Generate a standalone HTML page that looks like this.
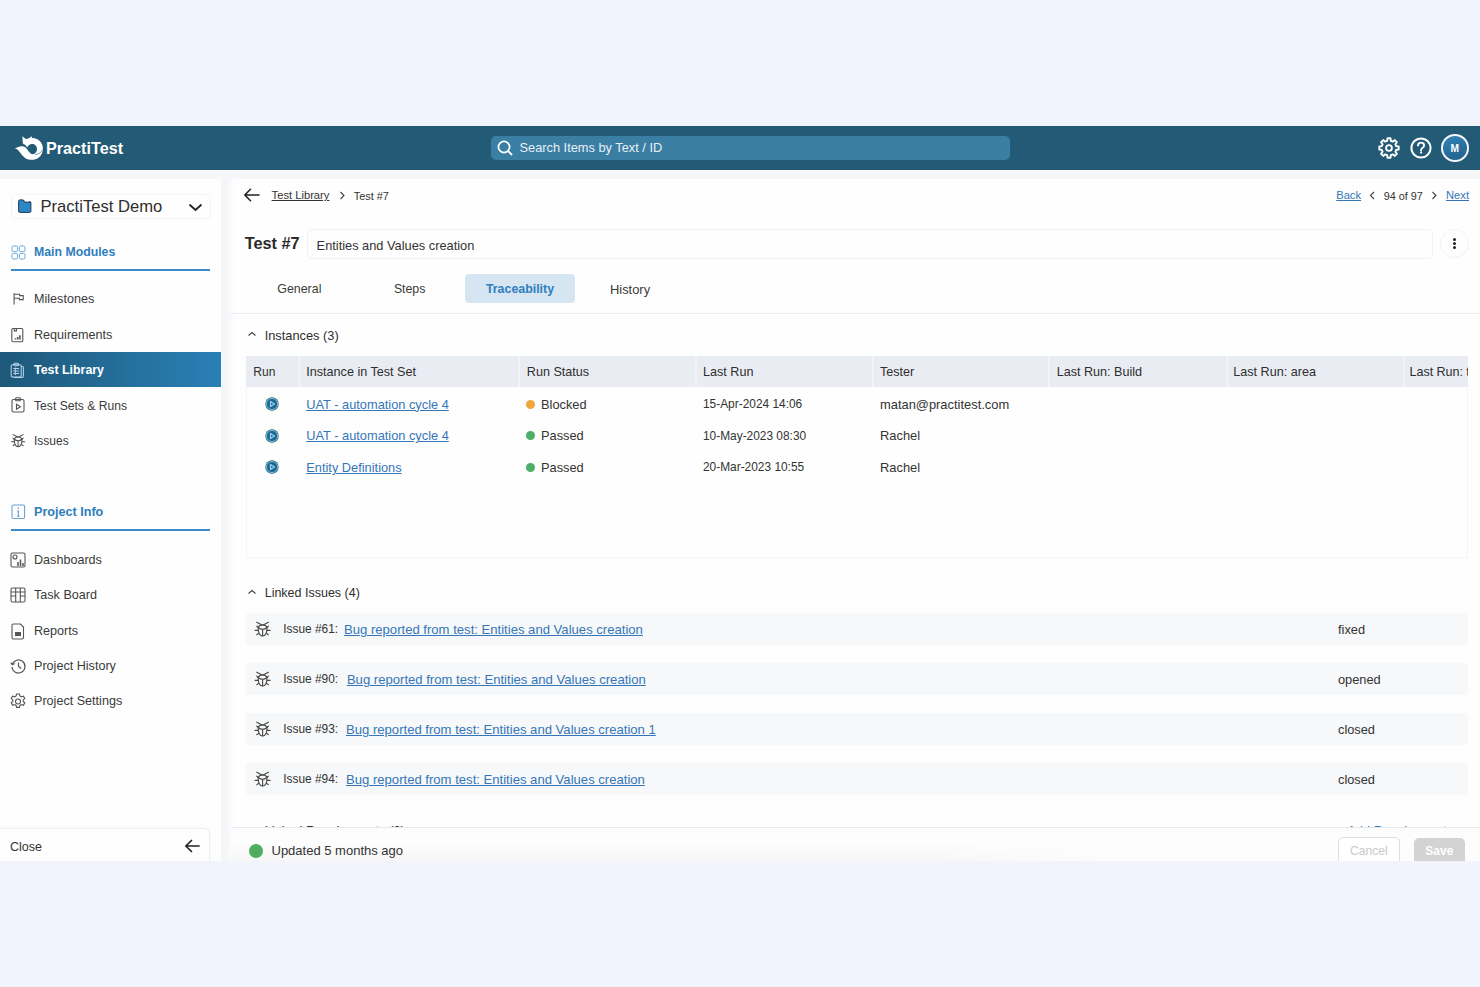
<!DOCTYPE html>
<html><head><meta charset="utf-8">
<style>
*{box-sizing:border-box;margin:0;padding:0}
html,body{width:1480px;height:987px;overflow:hidden;background:#f1f4fd;font-family:"Liberation Sans",sans-serif;color:#333}
.a{position:absolute}
.t{position:absolute;white-space:nowrap}
svg{overflow:visible}
</style></head><body>
<div class="a" style="left:0px;top:126px;width:1480px;height:44px;background:#235a75"></div>
<svg class="a" style="left:12px;top:132px;" width="36" height="30" viewBox="0 0 36 30"><path fill="#fff" fill-rule="evenodd" d="M10.9 11.8 L10.4 4.3 L14 7.2 C15 6.6 16 6.3 17 6.2 L19.6 4.2 L19.9 6.1 C26 6 30.9 10.5 30.9 16.5 C30.9 22 26.5 26.5 20.5 26.8 L20.5 22.2 C23.5 22 25 19.8 25 17 C25 14 22.8 12 20 12 C17.5 12 15.5 13.8 15.2 16 C14 13.8 12.5 12.5 10.9 11.8 Z"/>
<path fill="#fff" d="M2.8 16.6 C6.5 14.2 10.5 13.2 13.5 15.5 C15.5 17 16.5 20.5 19.5 22 C22.5 23.3 27 22.3 30.6 18.5 C30 24.5 25 28.2 18.5 27.8 C12 27.4 9.5 22 6.8 19 C5.6 17.6 4.3 16.9 2.8 16.6 Z"/>
<path d="M10.8 11.9 C12.8 12.7 14.3 14.2 15.3 16.2" fill="none" stroke="#235a75" stroke-width="0.7"/>
<path d="M23 22.6 C26 22.5 29 20.8 30.9 17.6" fill="none" stroke="#235a75" stroke-width="0.6"/></svg>
<div class="t" style="left:46.0px;top:137.79px;font-size:16.2px;line-height:21px;color:#fff;font-weight:700;">PractiTest</div>
<div class="a" style="left:491px;top:135.5px;width:519px;height:24.5px;background:#3a7ea4;border-radius:5px"></div>
<svg class="a" style="left:497px;top:140px;" width="16" height="16" viewBox="0 0 16 16"><circle cx="7" cy="7" r="5.6" fill="none" stroke="#fff" stroke-width="1.7"/><path d="M11 11 L14.5 14.5" stroke="#fff" stroke-width="1.8" stroke-linecap="round"/></svg>
<div class="t" style="left:519.5px;top:139.06px;font-size:12.8px;line-height:17px;color:#e8f0f5;">Search Items by Text / ID</div>
<svg class="a" style="left:1377.5px;top:136.5px;" width="22" height="22" viewBox="0 0 22 22"><g fill="none" stroke="#fff" stroke-width="1.9" stroke-linejoin="round"><path d="M20.68 9.47 L20.68 12.53 L18.17 12.84 L17.37 14.77 L18.93 16.76 L16.76 18.93 L14.77 17.37 L12.84 18.17 L12.53 20.68 L9.47 20.68 L9.16 18.17 L7.23 17.37 L5.24 18.93 L3.07 16.76 L4.63 14.77 L3.83 12.84 L1.32 12.53 L1.32 9.47 L3.83 9.16 L4.63 7.23 L3.07 5.24 L5.24 3.07 L7.23 4.63 L9.16 3.83 L9.47 1.32 L12.53 1.32 L12.84 3.83 L14.77 4.63 L16.76 3.07 L18.93 5.24 L17.37 7.23 L18.17 9.16Z"/><circle cx="11" cy="11" r="2.9"/></g></svg>
<svg class="a" style="left:1409.5px;top:137px;" width="22" height="22" viewBox="0 0 22 22"><circle cx="11" cy="11" r="9.6" fill="none" stroke="#fff" stroke-width="2"/><path d="M8 8.6c0-1.8 1.4-3 3.1-3 1.7 0 3 1.2 3 2.8 0 1.4-.9 2-1.8 2.6-.8.5-1.2 1-1.2 2v.6" fill="none" stroke="#fff" stroke-width="1.9" stroke-linecap="round"/><circle cx="11.1" cy="15.6" r="1.1" fill="#fff"/></svg>
<div class="a" style="left:1440.5px;top:133.5px;width:28px;height:28px;border-radius:50%;border:2px solid #f4f7fa;background:linear-gradient(160deg,#3384bb,#205e88)"></div>
<div class="t" style="left:1450.4px;top:141.77px;font-size:10.2px;line-height:13px;color:#fff;font-weight:700;">M</div>
<div class="a" style="left:0px;top:170px;width:1480px;height:691px;background:#f6f7f9"></div>
<div class="a" style="left:0px;top:179px;width:221px;height:682px;background:#fefefe"></div>
<div class="a" style="left:231px;top:179px;width:1249px;height:682px;background:#fefefe"></div>
<div class="a" style="left:221px;top:179px;width:14px;height:682px;background:linear-gradient(90deg,#f4f5f8 0px,#f5f6f9 6px,#f9fafb 10px,#fefefe 14px)"></div>
<div class="a" style="left:10.5px;top:194px;width:200px;height:25px;border:1px solid #f4f4f6;border-radius:4px;box-shadow:0 1px 2px rgba(0,0,0,0.015)"></div>
<svg class="a" style="left:16.6px;top:199.3px;" width="15" height="14" viewBox="0 0 15 14"><path d="M1.6 2.1c0-.7.5-1.2 1.2-1.2h3.4l1.5 1.7h5c.7 0 1.2.5 1.2 1.2v8.4c0 .7-.5 1.2-1.2 1.2H2.8c-.7 0-1.2-.5-1.2-1.2z" fill="#2c86c8" stroke="#1f3d57" stroke-width="1"/><path d="M7.6 2.7h4.6" stroke="#e8eef3" stroke-width="1"/><path d="M6.3 1l1.4 2.3h5.8" fill="none" stroke="#1f3d57" stroke-width="0.9"/></svg>
<div class="t" style="left:40.5px;top:195.65px;font-size:16.6px;line-height:22px;color:#2e2e2e;">PractiTest Demo</div>
<svg class="a" style="left:188px;top:203px;" width="15" height="9" viewBox="0 0 15 9"><path d="M2 2 L7.5 7 L13 2" fill="none" stroke="#222" stroke-width="1.8" stroke-linecap="round"/></svg>
<svg class="a" style="left:10.5px;top:244.5px;" width="15" height="15" viewBox="0 0 15 15"><g fill="none" stroke="#6aaade" stroke-width="1"><rect x="1" y="1" width="5.6" height="5.6" rx="1.4"/><rect x="8.4" y="1" width="5.6" height="5.6" rx="1.4"/><rect x="1" y="8.4" width="5.6" height="5.6" rx="1.4"/><rect x="8.4" y="8.4" width="5.6" height="5.6" rx="1.4"/></g></svg>
<div class="t" style="left:34.0px;top:243.94px;font-size:12.3px;line-height:16px;color:#2f7ebd;font-weight:700;">Main Modules</div>
<div class="a" style="left:11px;top:269px;width:199px;height:2px;background:#3f8bc9"></div>
<div class="t" style="left:34.0px;top:291.43px;font-size:12.6px;line-height:16px;color:#3a3a3a;">Milestones</div>
<svg class="a" style="left:9px;top:290.3px;" width="18" height="18" viewBox="0 0 18 18"><g fill="none" stroke="#555" stroke-width="1.1"><path d="M5.1 3.3V14.6"/><path d="M5.1 4.3H10.6V5.6H14.2V9.6H10.4V8.3H5.1"/></g></svg>
<div class="t" style="left:34.0px;top:326.83px;font-size:12.6px;line-height:16px;color:#3a3a3a;">Requirements</div>
<svg class="a" style="left:9px;top:325.7px;" width="18" height="18" viewBox="0 0 18 18"><g fill="none" stroke="#555" stroke-width="1.1"><rect x="2.8" y="2.5" width="11" height="13.3" rx="1.2"/><path d="M5.3 2.5v2.4h2.2V2.5"/><path d="M6.5 13.4v-1.2M8.7 13.4v-2.4M10.9 13.4V9.2" stroke-width="1.6"/></g></svg>
<div class="a" style="left:0px;top:352.4px;width:221px;height:35px;background:linear-gradient(90deg,#1d5879 0%,#236a94 45%,#2a80b6 100%)"></div>
<div class="t" style="left:34.0px;top:362.20px;font-size:12.4px;line-height:16px;color:#fff;font-weight:700;">Test Library</div>
<svg class="a" style="left:9px;top:361.0px;" width="18" height="18" viewBox="0 0 18 18"><g fill="none" stroke="#b6d3e8" stroke-width="1.05"><path d="M12.2 5.2h1c.7 0 1.2.5 1.2 1.2v8.8c0 .7-.5 1.2-1.2 1.2H4.5"/><rect x="2.2" y="3.8" width="10" height="12.2" rx="1.3"/><rect x="5" y="2.2" width="4.4" height="2.6" rx="0.9"/><path d="M4.3 7.5h5.8M4.3 10h5.8M4.3 12.5h5.8M6.3 6.5v7.5"/></g></svg>
<div class="t" style="left:34.0px;top:397.59px;font-size:12.15px;line-height:16px;color:#3a3a3a;">Test Sets & Runs</div>
<svg class="a" style="left:9px;top:396.3px;" width="18" height="18" viewBox="0 0 18 18"><g fill="none" stroke="#555" stroke-width="1.1"><rect x="3" y="3.5" width="12" height="12.5" rx="1.5"/><rect x="6.5" y="1.8" width="5" height="3" rx="1"/><path d="M7.5 8.2v5l4-2.5z"/></g></svg>
<div class="t" style="left:34.0px;top:432.94px;font-size:12px;line-height:16px;color:#3a3a3a;">Issues</div>
<svg class="a" style="left:7.2px;top:429.6px;transform:scale(0.88);transform-origin:0 0" width="26" height="24" viewBox="0 0 26 24"><g fill="none" stroke="#4a4a4a" stroke-width="1.15" stroke-linecap="round"><path d="M6.8 5.2L12 7.9M18.4 5.2L13.2 7.9"/><path d="M8.2 10.5C9 8.6 10.8 7.8 12.6 7.8C14.4 7.8 16.2 8.6 17 10.5"/><path d="M8.2 10.5C8 15 9.5 19 12.6 19C15.7 19 17.2 15 17 10.5"/><path d="M8.2 10.5C10 12 11.3 12.3 12.6 12.3C13.9 12.3 15.2 12 17 10.5M12.6 12.3V18.8"/><path d="M8.3 10.3L6.8 9.2M8 13.4H5.1M8.6 16.6L6.9 17.6M16.9 10.3L18.4 9.2M17.2 13.4H20.1M16.6 16.6L18.3 17.6"/></g></svg>
<svg class="a" style="left:11px;top:503.5px;" width="15" height="15" viewBox="0 0 15 15"><g fill="none" stroke="#6a9fcc" stroke-width="1.05"><rect x="1" y="1" width="12.6" height="13.5" rx="1.4"/><path d="M7.3 6.5v6M7.3 3.6v1.3" stroke-width="1.2"/><path d="M6 12.3h2.6M6.2 6.7h1"/></g></svg>
<div class="t" style="left:34.0px;top:504.13px;font-size:12.6px;line-height:16px;color:#2f7ebd;font-weight:700;">Project Info</div>
<div class="a" style="left:11px;top:528.8px;width:199px;height:2px;background:#3f8bc9"></div>
<div class="t" style="left:34.0px;top:551.63px;font-size:12.6px;line-height:16px;color:#3a3a3a;">Dashboards</div>
<svg class="a" style="left:9px;top:550.5px;" width="18" height="18" viewBox="0 0 18 18"><g fill="none" stroke="#555" stroke-width="1.1"><rect x="2" y="2" width="14" height="14" rx="1.5"/><circle cx="6" cy="6" r="2"/><path d="M9 15v-4M11.5 15V8.5M14 15v-3" stroke-width="1.5"/></g></svg>
<div class="t" style="left:34.0px;top:587.13px;font-size:12.6px;line-height:16px;color:#3a3a3a;">Task Board</div>
<svg class="a" style="left:9px;top:586.0px;" width="18" height="18" viewBox="0 0 18 18"><g fill="none" stroke="#555" stroke-width="1.1"><rect x="2" y="2" width="14" height="14" rx="1.5"/><path d="M2 6h14M6.7 2v14M11.3 2v14M2 10h4.7M11.3 10H16"/></g></svg>
<div class="t" style="left:34.0px;top:622.63px;font-size:12.6px;line-height:16px;color:#3a3a3a;">Reports</div>
<svg class="a" style="left:9px;top:621.5px;" width="18" height="18" viewBox="0 0 18 18"><g fill="none" stroke="#555" stroke-width="1.1"><path d="M4.5 2h7l3 3v10.5c0 .8-.7 1.5-1.5 1.5H4.5C3.7 17 3 16.3 3 15.5v-12C3 2.7 3.7 2 4.5 2z"/><rect x="6" y="10" width="6" height="4" fill="#555" stroke="none"/></g></svg>
<div class="t" style="left:34.0px;top:657.93px;font-size:12.6px;line-height:16px;color:#3a3a3a;">Project History</div>
<svg class="a" style="left:9px;top:656.8px;" width="18" height="18" viewBox="0 0 18 18"><g fill="none" stroke="#555" stroke-width="1.2"><path d="M3.3 7.5A6.5 6.5 0 1 1 3 10"/><path d="M1.8 5.5l1.5 2.2 2.3-1.3"/><path d="M9.5 5.5v4l2.8 2"/></g></svg>
<div class="t" style="left:34.0px;top:693.23px;font-size:12.6px;line-height:16px;color:#3a3a3a;">Project Settings</div>
<svg class="a" style="left:9px;top:692.1px;" width="18" height="18" viewBox="0 0 18 18"><g fill="none" stroke="#555" stroke-width="1.1"><path d="M7.6 2h2.8l.5 2 1.5.8 2-.7 1.4 2.4-1.6 1.4v1.6l1.6 1.4-1.4 2.4-2-.7-1.5.8-.5 2H7.6l-.5-2-1.5-.8-2 .7-1.4-2.4 1.6-1.4V7.9L2.2 6.5l1.4-2.4 2 .7 1.5-.8z"/><circle cx="9" cy="9.5" r="2.5"/></g></svg>
<div class="a" style="left:-10px;top:828px;width:220px;height:40px;border:1px solid #eeeff1;border-radius:6px;background:#fefefe;box-shadow:0 -1px 3px rgba(0,0,0,0.03)"></div>
<div class="t" style="left:10.0px;top:838.97px;font-size:12.5px;line-height:16px;color:#333;">Close</div>
<svg class="a" style="left:184px;top:839px;" width="16" height="14" viewBox="0 0 16 14"><path d="M15 7H1.8M7.5 1.5L1.8 7l5.7 5.5" fill="none" stroke="#222" stroke-width="1.7" stroke-linecap="round" stroke-linejoin="round"/></svg>
<svg class="a" style="left:243px;top:188px;" width="17" height="14" viewBox="0 0 17 14"><path d="M16 7H1.8M7.5 1.3L1.8 7l5.7 5.7" fill="none" stroke="#222" stroke-width="1.6" stroke-linecap="round" stroke-linejoin="round"/></svg>
<div class="t" style="left:271.6px;top:188.32px;font-size:11.2px;line-height:15px;color:#333;text-decoration:underline;">Test Library</div>
<svg class="a" style="left:339px;top:191px;" width="7" height="9" viewBox="0 0 7 9"><path d="M1.5 1l3.5 3.5L1.5 8" fill="none" stroke="#444" stroke-width="1.1"/></svg>
<div class="t" style="left:353.7px;top:188.92px;font-size:10.9px;line-height:14px;color:#333;">Test #7</div>
<div class="t" style="left:1336.2px;top:187.92px;font-size:11.2px;line-height:15px;color:#3576b8;text-decoration:underline;">Back</div>
<svg class="a" style="left:1369px;top:191px;" width="7" height="9" viewBox="0 0 7 9"><path d="M5 1L1.5 4.5 5 8" fill="none" stroke="#444" stroke-width="1.1"/></svg>
<div class="t" style="left:1383.8px;top:188.56px;font-size:10.8px;line-height:14px;color:#333;">94 of 97</div>
<svg class="a" style="left:1431px;top:191px;" width="7" height="9" viewBox="0 0 7 9"><path d="M1.5 1l3.5 3.5L1.5 8" fill="none" stroke="#444" stroke-width="1.1"/></svg>
<div class="t" style="left:1446.0px;top:187.92px;font-size:11.2px;line-height:15px;color:#3576b8;text-decoration:underline;">Next</div>
<div class="t" style="left:244.7px;top:233.45px;font-size:16.3px;line-height:21px;color:#2a2a2a;font-weight:700;">Test #7</div>
<div class="a" style="left:307px;top:228.5px;width:1125.5px;height:30px;border:1px solid #f2f2f4;border-radius:4px"></div>
<div class="t" style="left:316.6px;top:236.66px;font-size:12.8px;line-height:17px;color:#333;">Entities and Values creation</div>
<div class="a" style="left:1440px;top:228.5px;width:29px;height:29px;border:1px solid #f2f2f4;border-radius:50%"></div>
<div class="a" style="left:1453px;top:237.9px;width:3px;height:3px;background:#222;border-radius:50%"></div>
<div class="a" style="left:1453px;top:241.9px;width:3px;height:3px;background:#222;border-radius:50%"></div>
<div class="a" style="left:1453px;top:245.9px;width:3px;height:3px;background:#222;border-radius:50%"></div>
<div class="a" style="left:465px;top:274.4px;width:110px;height:28.6px;background:#d5e5f2;border-radius:4px"></div>
<div class="t" style="left:277.3px;top:281.30px;font-size:12.4px;line-height:16px;color:#3a3a3a;">General</div>
<div class="t" style="left:393.9px;top:281.34px;font-size:12.3px;line-height:16px;color:#3a3a3a;">Steps</div>
<div class="t" style="left:485.9px;top:281.30px;font-size:12.4px;line-height:16px;color:#2f7ebd;font-weight:700;">Traceability</div>
<div class="t" style="left:610.0px;top:280.63px;font-size:12.9px;line-height:17px;color:#3a3a3a;">History</div>
<div class="a" style="left:231px;top:312.5px;width:1249px;height:1px;background:#ececee"></div>
<svg class="a" style="left:246px;top:330px;" width="12" height="8" viewBox="0 0 12 8"><path d="M2.5 5.5l3.5-3 3.5 3" fill="none" stroke="#444" stroke-width="1.1"/></svg>
<div class="t" style="left:264.7px;top:326.86px;font-size:12.8px;line-height:17px;color:#2e2e2e;">Instances (3)</div>
<div class="a" style="left:246px;top:355.8px;width:1221.5px;height:31.2px;background:#e9ecf3"></div>
<div class="a" style="left:297.5px;top:355.8px;width:2px;height:31.2px;background:#f1f3f8"></div>
<div class="a" style="left:518px;top:355.8px;width:2px;height:31.2px;background:#f1f3f8"></div>
<div class="a" style="left:695px;top:355.8px;width:2px;height:31.2px;background:#f1f3f8"></div>
<div class="a" style="left:871.5px;top:355.8px;width:2px;height:31.2px;background:#f1f3f8"></div>
<div class="a" style="left:1048px;top:355.8px;width:2px;height:31.2px;background:#f1f3f8"></div>
<div class="a" style="left:1226px;top:355.8px;width:2px;height:31.2px;background:#f1f3f8"></div>
<div class="a" style="left:1402.5px;top:355.8px;width:2px;height:31.2px;background:#f1f3f8"></div>
<div class="a" style="left:246px;top:387px;width:1221.5px;height:171px;border:1px solid #f4f5f7;border-top:none;box-shadow:0 1px 1px rgba(0,0,0,0.015)"></div>
<div class="t" style="left:253.3px;top:363.84px;font-size:12px;line-height:16px;color:#2e2e2e;">Run</div>
<div class="t" style="left:306.3px;top:363.63px;font-size:12.6px;line-height:16px;color:#2e2e2e;">Instance in Test Set</div>
<div class="t" style="left:526.8px;top:363.63px;font-size:12.6px;line-height:16px;color:#2e2e2e;">Run Status</div>
<div class="t" style="left:703.0px;top:363.63px;font-size:12.6px;line-height:16px;color:#2e2e2e;">Last Run</div>
<div class="t" style="left:879.9px;top:363.63px;font-size:12.6px;line-height:16px;color:#2e2e2e;">Tester</div>
<div class="t" style="left:1056.7px;top:363.63px;font-size:12.6px;line-height:16px;color:#2e2e2e;">Last Run: Build</div>
<div class="t" style="left:1233.3px;top:363.63px;font-size:12.6px;line-height:16px;color:#2e2e2e;">Last Run: area</div>
<div class="a" style="left:1403px;top:360px;width:65px;height:24px;overflow:hidden">
<div class="t" style="left:6.5px;top:3.63px;font-size:12.6px;line-height:16px;color:#2e2e2e;word-spacing:-0.3px;">Last Run: test</div>
</div>
<svg class="a" style="left:265px;top:397.0px;" width="14" height="14" viewBox="0 0 14 14"><circle cx="7" cy="7" r="6.7" fill="#2a5874"/><circle cx="7" cy="7" r="5.6" fill="#18698f" stroke="#86bcdd" stroke-width="1"/><path d="M5.5 4.5v5l4-2.5z" fill="none" stroke="#9dcbea" stroke-width="1.3" stroke-linejoin="round"/></svg>
<div class="t" style="left:306.3px;top:395.86px;font-size:12.8px;line-height:17px;color:#3576b8;text-decoration:underline;">UAT - automation cycle 4</div>
<div class="a" style="left:526px;top:399.8px;width:9px;height:9px;background:#f0a83c;border-radius:50%"></div>
<div class="t" style="left:541.0px;top:395.86px;font-size:12.8px;line-height:17px;color:#333;">Blocked</div>
<div class="t" style="left:703.0px;top:397.18px;font-size:11.9px;line-height:15px;color:#333;">15-Apr-2024 14:06</div>
<div class="t" style="left:880.0px;top:395.83px;font-size:12.9px;line-height:17px;color:#333;">matan@practitest.com</div>
<svg class="a" style="left:265px;top:428.5px;" width="14" height="14" viewBox="0 0 14 14"><circle cx="7" cy="7" r="6.7" fill="#2a5874"/><circle cx="7" cy="7" r="5.6" fill="#18698f" stroke="#86bcdd" stroke-width="1"/><path d="M5.5 4.5v5l4-2.5z" fill="none" stroke="#9dcbea" stroke-width="1.3" stroke-linejoin="round"/></svg>
<div class="t" style="left:306.3px;top:427.36px;font-size:12.8px;line-height:17px;color:#3576b8;text-decoration:underline;">UAT - automation cycle 4</div>
<div class="a" style="left:526px;top:431.3px;width:9px;height:9px;background:#4cae67;border-radius:50%"></div>
<div class="t" style="left:541.0px;top:427.36px;font-size:12.8px;line-height:17px;color:#333;">Passed</div>
<div class="t" style="left:703.0px;top:428.68px;font-size:11.9px;line-height:15px;color:#333;">10-May-2023 08:30</div>
<div class="t" style="left:880.0px;top:427.33px;font-size:12.9px;line-height:17px;color:#333;">Rachel</div>
<svg class="a" style="left:265px;top:460.3px;" width="14" height="14" viewBox="0 0 14 14"><circle cx="7" cy="7" r="6.7" fill="#2a5874"/><circle cx="7" cy="7" r="5.6" fill="#18698f" stroke="#86bcdd" stroke-width="1"/><path d="M5.5 4.5v5l4-2.5z" fill="none" stroke="#9dcbea" stroke-width="1.3" stroke-linejoin="round"/></svg>
<div class="t" style="left:306.3px;top:459.16px;font-size:12.8px;line-height:17px;color:#3576b8;text-decoration:underline;">Entity Definitions</div>
<div class="a" style="left:526px;top:463.1px;width:9px;height:9px;background:#4cae67;border-radius:50%"></div>
<div class="t" style="left:541.0px;top:459.16px;font-size:12.8px;line-height:17px;color:#333;">Passed</div>
<div class="t" style="left:703.0px;top:460.48px;font-size:11.9px;line-height:15px;color:#333;">20-Mar-2023 10:55</div>
<div class="t" style="left:880.0px;top:459.13px;font-size:12.9px;line-height:17px;color:#333;">Rachel</div>
<svg class="a" style="left:246px;top:588px;" width="12" height="8" viewBox="0 0 12 8"><path d="M2.5 5.5l3.5-3 3.5 3" fill="none" stroke="#444" stroke-width="1.1"/></svg>
<div class="t" style="left:264.7px;top:584.87px;font-size:12.5px;line-height:16px;color:#2e2e2e;">Linked Issues (4)</div>
<div class="a" style="left:245.5px;top:613px;width:1222.5px;height:31.7px;background:#f6f8f9;border-radius:3px"></div>
<svg class="a" style="left:250px;top:617px;" width="26" height="24" viewBox="0 0 26 24"><g fill="none" stroke="#4a4a4a" stroke-width="1.15" stroke-linecap="round"><path d="M6.8 5.2L12 7.9M18.4 5.2L13.2 7.9"/><path d="M8.2 10.5C9 8.6 10.8 7.8 12.6 7.8C14.4 7.8 16.2 8.6 17 10.5"/><path d="M8.2 10.5C8 15 9.5 19 12.6 19C15.7 19 17.2 15 17 10.5"/><path d="M8.2 10.5C10 12 11.3 12.3 12.6 12.3C13.9 12.3 15.2 12 17 10.5M12.6 12.3V18.8"/><path d="M8.3 10.3L6.8 9.2M8 13.4H5.1M8.6 16.6L6.9 17.6M16.9 10.3L18.4 9.2M17.2 13.4H20.1M16.6 16.6L18.3 17.6"/></g></svg>
<div class="t" style="left:283.2px;top:622.18px;font-size:11.9px;line-height:15px;color:#333;">Issue #61:</div>
<div class="t" style="left:344.0px;top:620.76px;font-size:13.1px;line-height:17px;color:#3576b8;text-decoration:underline;">Bug reported from test: Entities and Values creation</div>
<div class="t" style="left:1338.0px;top:620.86px;font-size:12.8px;line-height:17px;color:#333;">fixed</div>
<div class="a" style="left:245.5px;top:663.3px;width:1222.5px;height:31.7px;background:#f6f8f9;border-radius:3px"></div>
<svg class="a" style="left:250px;top:667.3px;" width="26" height="24" viewBox="0 0 26 24"><g fill="none" stroke="#4a4a4a" stroke-width="1.15" stroke-linecap="round"><path d="M6.8 5.2L12 7.9M18.4 5.2L13.2 7.9"/><path d="M8.2 10.5C9 8.6 10.8 7.8 12.6 7.8C14.4 7.8 16.2 8.6 17 10.5"/><path d="M8.2 10.5C8 15 9.5 19 12.6 19C15.7 19 17.2 15 17 10.5"/><path d="M8.2 10.5C10 12 11.3 12.3 12.6 12.3C13.9 12.3 15.2 12 17 10.5M12.6 12.3V18.8"/><path d="M8.3 10.3L6.8 9.2M8 13.4H5.1M8.6 16.6L6.9 17.6M16.9 10.3L18.4 9.2M17.2 13.4H20.1M16.6 16.6L18.3 17.6"/></g></svg>
<div class="t" style="left:283.2px;top:672.48px;font-size:11.9px;line-height:15px;color:#333;">Issue #90:</div>
<div class="t" style="left:346.9px;top:671.06px;font-size:13.1px;line-height:17px;color:#3576b8;text-decoration:underline;">Bug reported from test: Entities and Values creation</div>
<div class="t" style="left:1338.0px;top:671.16px;font-size:12.8px;line-height:17px;color:#333;">opened</div>
<div class="a" style="left:245.5px;top:713px;width:1222.5px;height:31.7px;background:#f6f8f9;border-radius:3px"></div>
<svg class="a" style="left:250px;top:717px;" width="26" height="24" viewBox="0 0 26 24"><g fill="none" stroke="#4a4a4a" stroke-width="1.15" stroke-linecap="round"><path d="M6.8 5.2L12 7.9M18.4 5.2L13.2 7.9"/><path d="M8.2 10.5C9 8.6 10.8 7.8 12.6 7.8C14.4 7.8 16.2 8.6 17 10.5"/><path d="M8.2 10.5C8 15 9.5 19 12.6 19C15.7 19 17.2 15 17 10.5"/><path d="M8.2 10.5C10 12 11.3 12.3 12.6 12.3C13.9 12.3 15.2 12 17 10.5M12.6 12.3V18.8"/><path d="M8.3 10.3L6.8 9.2M8 13.4H5.1M8.6 16.6L6.9 17.6M16.9 10.3L18.4 9.2M17.2 13.4H20.1M16.6 16.6L18.3 17.6"/></g></svg>
<div class="t" style="left:283.2px;top:722.18px;font-size:11.9px;line-height:15px;color:#333;">Issue #93:</div>
<div class="t" style="left:346.0px;top:720.76px;font-size:13.1px;line-height:17px;color:#3576b8;text-decoration:underline;">Bug reported from test: Entities and Values creation 1</div>
<div class="t" style="left:1338.0px;top:720.86px;font-size:12.8px;line-height:17px;color:#333;">closed</div>
<div class="a" style="left:245.5px;top:763.2px;width:1222.5px;height:31.7px;background:#f6f8f9;border-radius:3px"></div>
<svg class="a" style="left:250px;top:767.2px;" width="26" height="24" viewBox="0 0 26 24"><g fill="none" stroke="#4a4a4a" stroke-width="1.15" stroke-linecap="round"><path d="M6.8 5.2L12 7.9M18.4 5.2L13.2 7.9"/><path d="M8.2 10.5C9 8.6 10.8 7.8 12.6 7.8C14.4 7.8 16.2 8.6 17 10.5"/><path d="M8.2 10.5C8 15 9.5 19 12.6 19C15.7 19 17.2 15 17 10.5"/><path d="M8.2 10.5C10 12 11.3 12.3 12.6 12.3C13.9 12.3 15.2 12 17 10.5M12.6 12.3V18.8"/><path d="M8.3 10.3L6.8 9.2M8 13.4H5.1M8.6 16.6L6.9 17.6M16.9 10.3L18.4 9.2M17.2 13.4H20.1M16.6 16.6L18.3 17.6"/></g></svg>
<div class="t" style="left:283.2px;top:772.38px;font-size:11.9px;line-height:15px;color:#333;">Issue #94:</div>
<div class="t" style="left:346.0px;top:770.96px;font-size:13.1px;line-height:17px;color:#3576b8;text-decoration:underline;">Bug reported from test: Entities and Values creation</div>
<div class="t" style="left:1338.0px;top:771.06px;font-size:12.8px;line-height:17px;color:#333;">closed</div>
<div class="a" style="left:231px;top:800px;width:1249px;height:26.5px;overflow:hidden">
<svg class="a" style="left:15px;top:26px;" width="12" height="8" viewBox="0 0 12 8"><path d="M2.5 5.5l3.5-3 3.5 3" fill="none" stroke="#444" stroke-width="1.1"/></svg>
<div class="t" style="left:33.7px;top:22.06px;font-size:12.8px;line-height:17px;color:#2e2e2e;">Linked Requirements (2)</div>
<div class="t" style="left:1106.0px;top:22.06px;font-size:12.8px;line-height:17px;color:#2f7ebd;">+ Add Requirements</div>
</div>
<div class="a" style="left:231px;top:826.5px;width:1249px;height:34.5px;background:#fdfdfd;border-top:1px solid #e8e9eb"></div>
<div class="a" style="left:231px;top:842px;width:920px;height:19px;background:linear-gradient(180deg,rgba(0,0,0,0) 0%,rgba(0,0,0,0.025) 100%);-webkit-mask-image:linear-gradient(90deg,#000 0%,#000 75%,transparent 100%)"></div>
<div class="a" style="left:248.5px;top:844px;width:14px;height:14px;background:#4cae5e;border-radius:50%"></div>
<div class="t" style="left:271.5px;top:842.00px;font-size:13px;line-height:17px;color:#333;">Updated 5 months ago</div>
<div class="a" style="left:1337.7px;top:837.4px;width:62.7px;height:30px;border:1px solid #dfdfdf;border-radius:5px;background:#fff"></div>
<div class="t" style="left:1349.9px;top:842.77px;font-size:12.2px;line-height:16px;color:#c9c9c9;">Cancel</div>
<div class="a" style="left:1413.7px;top:837.7px;width:51.5px;height:30px;background:#d3d3d3;border-radius:5px"></div>
<div class="t" style="left:1425.3px;top:842.84px;font-size:12px;line-height:16px;color:#fff;font-weight:700;">Save</div>
<div class="a" style="left:0px;top:861px;width:1480px;height:126px;background:#f1f4fd"></div>
</body></html>
